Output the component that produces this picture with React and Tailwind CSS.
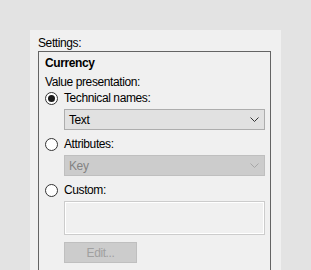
import React from "react";

const Chevron = ({ color }) => (
  <svg width="9" height="5" viewBox="0 0 9 5" className="mr-[5px]">
    <path d="M0.5 0.5 L4.5 4.5 L8.5 0.5" fill="none" stroke={color} strokeWidth="1" />
  </svg>
);

const Radio = ({ checked, label }) => (
  <div className="flex items-center h-[16px]">
    <div className="w-[13px] h-[13px] rounded-full border border-[#333333] bg-white flex items-center justify-center">
      {checked && <div className="w-[7px] h-[7px] rounded-full bg-[#1a1a1a]" />}
    </div>
    <span className="ml-[6px] text-black">{label}</span>
  </div>
);

export default function App() {
  return (
    <div
      className="w-[311px] h-[270px] bg-[#e3e3e3] pt-[30px] pl-[30px] overflow-hidden text-[12px] leading-[16px] tracking-[-0.4px] text-black"
      style={{ fontFamily: '"Liberation Sans", Arial, sans-serif' }}
    >
      <div className="w-[251px] h-[240px] bg-[#f0f0f0] pl-[8px] pt-[5px]">
        <div>Settings:</div>
        <div className="w-[233px] h-[230px] border border-[#646464] pl-[6px] pt-[3px]">
          <div className="font-bold">Currency</div>
          <div className="mt-[3px]">Value presentation:</div>

          <Radio checked label="Technical names:" />
          <div className="mt-[3px] ml-[19px] w-[201px] h-[21px] bg-[#e1e1e1] border border-[#adadad] flex items-center justify-between pl-[4px]">
            <span>Text</span>
            <Chevron color="#333333" />
          </div>

          <div className="mt-[6px]">
            <Radio label="Attributes:" />
          </div>
          <div className="mt-[3px] ml-[19px] w-[201px] h-[21px] bg-[#cccccc] border border-[#bfbfbf] flex items-center justify-between pl-[4px] text-[#838383]">
            <span>Key</span>
            <Chevron color="#a6a6a6" />
          </div>

          <div className="mt-[6px]">
            <Radio label="Custom:" />
          </div>
          <div className="mt-[3px] ml-[19px] w-[201px] h-[34px] border border-[#cccccc]">
            <div className="w-full h-full border border-white bg-[#f0f0f0]" />
          </div>

          <div className="mt-[7px] ml-[19px] w-[73px] h-[21px] bg-[#cccccc] border border-[#bfbfbf] flex items-center justify-center text-[#a0a0a0]">
            Edit...
          </div>
        </div>
      </div>
    </div>
  );
}
